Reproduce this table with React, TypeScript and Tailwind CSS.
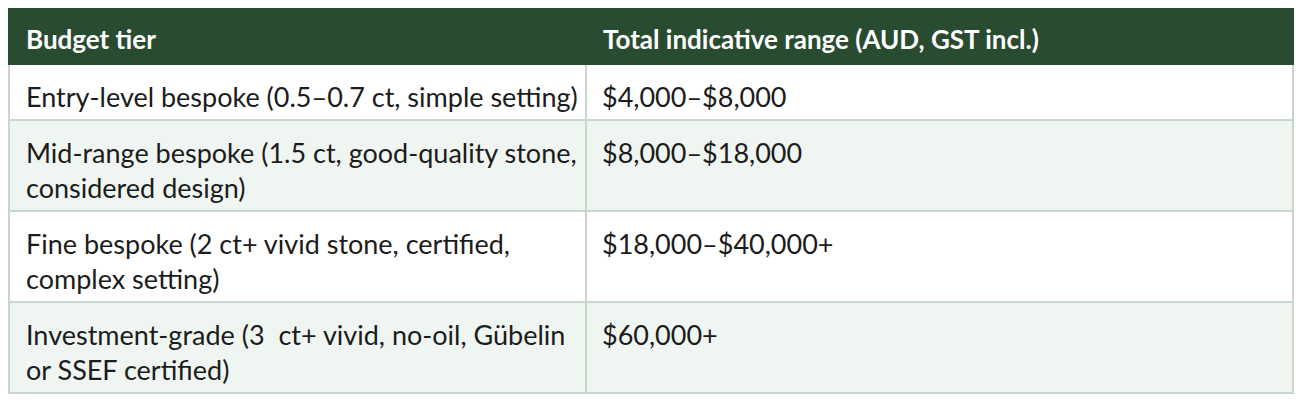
import React from "react";

const rows: { tier: string[]; range: string; alt: boolean }[] = [
  { tier: ["Entry-level bespoke (0.5–0.7 ct, simple setting)"], range: "$4,000–$8,000", alt: false },
  { tier: ["Mid-range bespoke (1.5 ct, good-quality stone,", "considered design)"], range: "$8,000–$18,000", alt: true },
  { tier: ["Fine bespoke (2 ct+ vivid stone, certified,", "complex setting)"], range: "$18,000–$40,000+", alt: false },
  { tier: ["Investment-grade (3\u00a0 ct+ vivid, no-oil, Gübelin", "or SSEF certified)"], range: "$60,000+", alt: true },
];

export default function App() {
  return (
    <div className="bg-white w-[1304px] h-[400px] p-2" style={{ fontFamily: "Lato, 'Open Sans', sans-serif" }}>
      <div className="w-[1286px]">
        <div className="flex bg-[#294c31] text-white font-bold text-[26px] leading-[35px]">
          <div className="w-[579px] pl-[18px] pt-[14px] pb-[8px]">Budget tier</div>
          <div className="flex-1 pl-[16px] pt-[14px] pb-[8px]">Total indicative range (AUD, GST incl.)</div>
        </div>
        <div className="border-x-2 border-[#c9d6cb]">
          {rows.map((r, i) => (
            <div
              key={i}
              className={`flex border-b-2 border-[#c9d6cb] text-[27px] leading-[35px] text-[#1c1c1c] ${r.alt ? "bg-[#eff5f0]" : "bg-white"}`}
            >
              <div className="w-[577px] shrink-0 border-r-2 border-[#c9d6cb] pl-[16px] pr-[2px] pt-[14px] pb-[5px] whitespace-nowrap overflow-hidden">
                {r.tier.map((t, j) => (
                  <div key={j}>{t}</div>
                ))}
              </div>
              <div className="flex-1 pl-[15px] pt-[14px] pb-[5px]">{r.range}</div>
            </div>
          ))}
        </div>
      </div>
    </div>
  );
}
